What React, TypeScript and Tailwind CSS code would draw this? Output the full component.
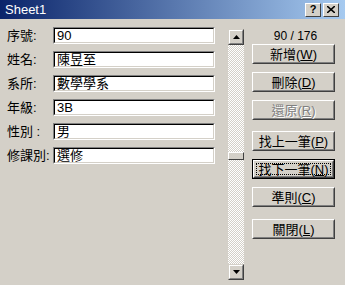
import React from "react";

const FONT = { fontFamily: '"Liberation Sans", "Noto Sans CJK TC", sans-serif' };

function Field({ label, value }: { label: string; value: string }) {
  return (
    <div className="flex items-center h-[17px]">
      <div className="w-[46px] text-[13px] leading-none text-black whitespace-nowrap">{label}</div>
      <div className="w-[162px] h-[17px] border border-t-[#808080] border-l-[#808080] border-r-white border-b-white">
        <div className="w-full h-full bg-white border border-t-black border-l-black border-r-[#d4d0c8] border-b-[#d4d0c8] flex items-center pl-[2px] text-[13px] leading-none text-black">
          {value}
        </div>
      </div>
    </div>
  );
}

function Btn({
  children,
  disabled,
  isDefault,
}: {
  children: React.ReactNode;
  disabled?: boolean;
  isDefault?: boolean;
}) {
  const inner = (
    <div className="w-full h-full border border-t-white border-l-white border-r-[#404040] border-b-[#404040]">
      <div className="w-full h-full border border-t-[#d4d0c8] border-l-[#d4d0c8] border-r-[#808080] border-b-[#808080] flex items-stretch">
        <div
          className={
            "flex-1 flex items-center justify-center text-[13px] leading-none " +
            (disabled ? "text-[#808080] [text-shadow:1px_1px_0_#fff]" : "text-black") +
            (isDefault ? " m-[1px] border border-dotted border-black" : "")
          }
        >
          {children}
        </div>
      </div>
    </div>
  );
  if (isDefault) {
    return <div className="w-[83px] h-[20px] border border-black">{inner}</div>;
  }
  return <div className="w-[83px] h-[20px]">{inner}</div>;
}

function Label({ text, k }: { text: string; k: string }) {
  return (
    <span className="whitespace-nowrap">
      {text}(<span className="underline">{k}</span>)
    </span>
  );
}

function ArrowBtn({ up }: { up?: boolean }) {
  return (
    <div className="w-[16px] h-[16px] bg-[#d4d0c8] border border-t-[#d4d0c8] border-l-[#d4d0c8] border-r-[#404040] border-b-[#404040]">
      <div className="w-full h-full border border-t-white border-l-white border-r-[#808080] border-b-[#808080] flex items-center justify-center">
        <svg width="7" height="4" viewBox="0 0 7 4">
          {up ? <polygon points="3.5,0 7,4 0,4" fill="#000" /> : <polygon points="0,0 7,0 3.5,4" fill="#000" />}
        </svg>
      </div>
    </div>
  );
}

export default function App() {
  const current = 90;
  const total = 176;
  const trackH = 219;
  const thumbH = 8;
  const thumbTop = Math.round(((current - 1) / (total - 1)) * (trackH - thumbH));

  return (
    <div className="w-[345px] h-[285px] bg-[#d4d0c8] flex flex-col overflow-hidden" style={FONT}>
      <div className="h-[19px] flex items-center justify-between pl-[5px] pr-[6px] bg-[linear-gradient(to_right,#0a246a,#a6caf0)]">
        <span className="text-white text-[13px] leading-none">Sheet1</span>
        <div className="flex gap-[2px]">
          {["?", "✕"].map((c) => (
            <div
              key={c}
              className="w-[16px] h-[14px] bg-[#d4d0c8] border border-t-white border-l-white border-r-[#404040] border-b-[#404040] flex items-center justify-center text-[11px] font-bold leading-none text-black"
            >
              {c === "?" ? "?" : (
                <svg width="8" height="7" viewBox="0 0 8 7">
                  <path d="M0 0 L8 7 M8 0 L0 7" stroke="#000" strokeWidth="1.6" />
                </svg>
              )}
            </div>
          ))}
        </div>
      </div>
      <div className="flex flex-1">
        <div className="pl-[7px] pt-[8px] flex flex-col gap-[7px]">
          <Field label="序號:" value="90" />
          <Field label="姓名:" value="陳昱至" />
          <Field label="系所:" value="數學學系" />
          <Field label="年級:" value="3B" />
          <Field label="性別 :" value="男" />
          <Field label="修課別:" value="選修" />
        </div>
        <div className="ml-[13px] mt-[10px] w-[16px] h-[251px] flex flex-col">
          <ArrowBtn up />
          <div className="flex-1 bg-[image:repeating-conic-gradient(#ffffff_0%_25%,#d4d0c8_0%_50%)] bg-[length:2px_2px]">
            <div className="w-[16px]" style={{ height: thumbTop }} />
            <div className="w-[16px] h-[8px] bg-[#d4d0c8] border border-t-white border-l-white border-r-[#404040] border-b-[#404040]" />
          </div>
          <ArrowBtn />
        </div>
        <div className="ml-[8px] w-[83px] flex flex-col pt-[8px]">
          <div className="h-[17px] flex items-center justify-center text-[12px] leading-none text-black pl-[4px]">
            {current} / {total}
          </div>
          <div className="flex flex-col gap-[8px]">
            <Btn><Label text="新增" k="W" /></Btn>
            <Btn><Label text="刪除" k="D" /></Btn>
            <Btn disabled><Label text="還原" k="R" /></Btn>
          </div>
          <div className="flex flex-col gap-[8px] mt-[11px]">
            <Btn><Label text="找上一筆" k="P" /></Btn>
            <Btn isDefault><Label text="找下一筆" k="N" /></Btn>
            <Btn><Label text="準則" k="C" /></Btn>
          </div>
          <div className="mt-[12px]">
            <Btn><Label text="關閉" k="L" /></Btn>
          </div>
        </div>
      </div>
    </div>
  );
}
